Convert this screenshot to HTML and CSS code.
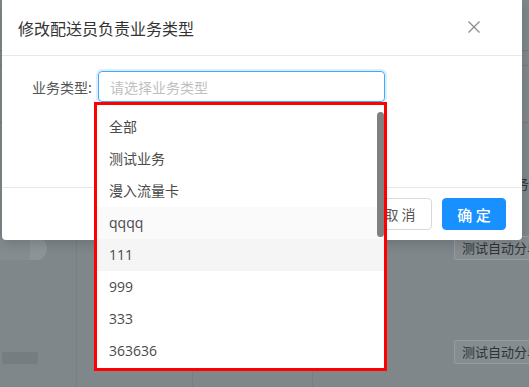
FILE: index.html
```html
<!DOCTYPE html>
<html lang="zh-CN">
<head>
  <meta charset="UTF-8">
  <meta name="viewport" content="width=device-width, initial-scale=1.0">
  <title>修改配送员负责业务类型</title>
  <link rel="stylesheet" href="styles.css">
</head>
<body>

  <!-- page under the mask -->
  <div class="page">
    <div class="page-top">
      <div class="top-line"></div>
      <div class="top-line"></div>
      <div class="top-line"></div>
    </div>
    <div class="page-head"><span>业务</span></div>
    <div class="page-row">
      <div class="cell cell-a"><span class="switch"><span class="switch-knob"></span></span></div>
      <div class="cell cell-b"></div>
      <div class="cell cell-c"></div>
      <div class="cell cell-d"></div>
      <div class="cell cell-tag"><span class="tag">测试自动分单</span></div>
    </div>
    <div class="page-row">
      <div class="cell cell-a"><span class="bar"></span></div>
      <div class="cell cell-b"></div>
      <div class="cell cell-c"></div>
      <div class="cell cell-d"></div>
      <div class="cell cell-tag"><span class="tag">测试自动分单</span></div>
    </div>
  </div>

  <div class="modal">
    <div class="modal-header">
      <div class="modal-title">修改配送员负责业务类型</div>
      <svg class="modal-close" width="12" height="12" viewBox="0 0 12 12">
        <path d="M0.5 0.5 L11.5 11.5 M11.5 0.5 L0.5 11.5" stroke="#8c8c8c" stroke-width="1.3" fill="none"/>
      </svg>
    </div>
    <div class="modal-body">
      <div class="form-row">
        <label class="form-label">业务类型:</label>
        <div class="select">
          <span class="placeholder">请选择业务类型</span>
        </div>
      </div>
    </div>
    <div class="modal-footer">
      <button class="btn">取 消</button>
      <button class="btn btn-primary">确 定</button>
    </div>
  </div>

  <div class="dropdown">
    <ul class="options">
      <li>全部</li>
      <li>测试业务</li>
      <li>漫入流量卡</li>
      <li class="active">qqqq</li>
      <li class="hover">111</li>
      <li>999</li>
      <li>333</li>
      <li>363636</li>
    </ul>
    <div class="scroll-thumb"></div>
  </div>

</body>
</html>
```

FILE: styles.css
```css
body {
  margin: 0;
  width: 529px;
  height: 387px;
  overflow: hidden;
  position: relative;
  background: #7f878b;
  font-family: "Open Sans", "Noto Sans CJK SC", sans-serif;
  font-size: 14px;
}

/* background page, dimmed by the mask */
.page {
  width: 529px;
}

.page-top {
  height: 170px;
  display: flex;
  flex-direction: column;
  padding-top: 50px;
  box-sizing: border-box;
}

.top-line {
  height: 1px;
  background: #737a7e;
  margin-bottom: 14px;
}

.top-line:nth-child(2) {
  margin-bottom: 56px;
}

.page-head {
  height: 26px;
  display: flex;
  justify-content: flex-end;
  align-items: center;
  color: #2e3336;
  white-space: nowrap;
}

.page-row {
  height: 104px;
  display: flex;
}

.cell {
  flex-shrink: 0;
  border-right: 1px solid #788084;
  display: flex;
  align-items: center;
}

.cell-a { width: 76px; }
.cell-b { width: 115px; }
.cell-c { width: 119px; }
.cell-d { width: 141px; border-right: none; }

.cell-tag {
  border-right: none;
  white-space: nowrap;
}

.switch {
  display: flex;
  width: 47px;
  height: 23px;
  background: #858c90;
  border-radius: 0 12px 12px 0;
  justify-content: flex-end;
}

.switch-knob {
  width: 17px;
  height: 23px;
  background: #8c9497;
  border-radius: 0 12px 12px 0;
}

.bar {
  display: block;
  width: 36px;
  height: 12px;
  margin: 12px 0 0 2px;
  background: #767d81;
  border-radius: 2px;
}

.tag {
  display: inline-block;
  height: 22px;
  line-height: 22px;
  padding: 0 7px;
  border: 1px solid #979ea1;
  background: #868d91;
  color: #2f3437;
  border-radius: 2px;
  font-size: 13px;
}

/* modal */
.modal {
  position: absolute;
  left: 2px;
  top: 0;
  width: 520px;
  background: #fff;
  box-shadow: 0 4px 12px rgba(0, 0, 0, 0.15);
  border-radius: 0 0 4px 4px;
}

.modal-header {
  height: 56px;
  box-sizing: border-box;
  padding: 0 42px 0 16px;
  border-bottom: 1px solid #e8e8e8;
  display: flex;
  align-items: center;
  justify-content: space-between;
}

.modal-title {
  font-size: 16px;
  line-height: 22px;
  color: #333;
  font-family: "Noto Sans CJK SC", sans-serif;
}

.modal-close {
  margin-top: -2px;
}

.modal-body {
  height: 132px;
  box-sizing: border-box;
  padding: 15px 0 0 28px;
  border-bottom: 1px solid #e8e8e8;
}

.form-row {
  display: flex;
  align-items: center;
  gap: 6px;
}

.form-label {
  color: #555;
  font-family: "Noto Sans CJK SC", sans-serif;
  width: 62px;
  text-align: right;
}

.select {
  width: 287px;
  height: 31px;
  box-sizing: border-box;
  border: 1px solid #40a9ff;
  border-radius: 4px;
  box-shadow: 0 0 0 2px rgba(24, 144, 255, 0.15);
  padding-left: 11px;
  display: flex;
  align-items: center;
}

.placeholder {
  color: #bfbfbf;
  font-family: "Noto Sans CJK SC", sans-serif;
}

.modal-footer {
  padding: 10px 16px;
  display: flex;
  justify-content: flex-end;
  gap: 10px;
}

.btn {
  width: 64px;
  height: 32px;
  border: 1px solid #d9d9d9;
  border-radius: 4px;
  background: #fff;
  color: #555;
  font-family: "Noto Sans CJK SC", sans-serif;
  font-size: 14px;
  padding: 0;
}

.btn-primary {
  background: #1890ff;
  border-color: #1890ff;
  color: #fff;
  font-weight: 500;
  font-size: 15px;
}

/* dropdown, outlined in red */
.dropdown {
  position: absolute;
  left: 94px;
  top: 102px;
  width: 293px;
  height: 269px;
  box-sizing: border-box;
  border: 3px solid #f00;
  background: #fff;
  overflow: hidden;
}

.options {
  list-style: none;
  margin: 0;
  padding: 6px 0 0;
}

.options li {
  height: 32px;
  line-height: 32px;
  padding-left: 12px;
  color: #4a4a4a;
}

.options li.active {
  background: #fafafa;
}

.options li.hover {
  background: #f5f5f5;
}

.scroll-thumb {
  position: absolute;
  right: 0;
  top: 7px;
  width: 7px;
  height: 125px;
  border-radius: 4px;
  background: #808080;
}
```
